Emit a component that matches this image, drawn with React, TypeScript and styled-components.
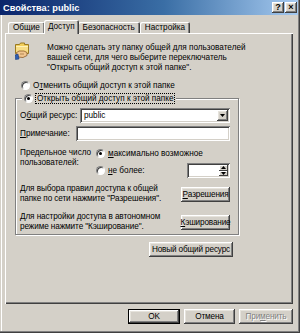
import React from "react";
import styled, { createGlobalStyle } from "styled-components";

const GlobalStyle = createGlobalStyle`
  html, body {
    margin: 0;
    padding: 0;
    background: #d4d0c8;
  }
  body {
    font-family: "Liberation Sans", Arial, sans-serif;
    font-size: 8.2px;
    color: #000;
  }
`;

const raised = `
  box-shadow: inset -1px -1px #404040, inset 1px 1px #fff, inset -2px -2px #808080, inset 2px 2px #e6e3dc;
`;

const sunken = `
  box-shadow: inset 1px 1px #808080, inset -1px -1px #fff, inset 2px 2px #404040, inset -2px -2px #d4d0c8;
`;

const Window = styled.div`
  width: 300px;
  height: 333px;
  box-sizing: border-box;
  background: #d4d0c8;
  display: flex;
  flex-direction: column;
  padding: 0 2px 2px 0;
  box-shadow: inset -1px -1px #404040, inset -2px -2px #808080, inset 1px 0 #d4d0c8, inset 2px 0 #fff;
`;

const TitleBar = styled.div`
  height: 15px;
  flex: none;
  display: flex;
  align-items: center;
  justify-content: space-between;
  padding: 0 1px 0 3px;
  background: linear-gradient(90deg, #0a246a 0%, #3a6ea5 55%, #a6caf0 100%);
  color: #fff;
  font-weight: bold;
  font-size: 9.2px;
`;

const TitleButtons = styled.div`
  display: flex;
  gap: 1px;
`;

const TitleButton = styled.div`
  width: 12px;
  height: 11px;
  background: #d4d0c8;
  ${raised}
  color: #000;
  font-size: 9px;
  font-weight: bold;
  line-height: 11px;
  text-align: center;
`;

const Body = styled.div`
  flex: 1;
  display: flex;
  flex-direction: column;
  padding: 5px 5px 0 5px;
`;

const TabStrip = styled.div`
  height: 13px;
  display: flex;
  align-items: flex-end;
  padding-left: 3px;
`;

const Tab = styled.div<{ $active?: boolean }>`
  height: ${(p) => (p.$active ? 14 : 11)}px;
  line-height: ${(p) => (p.$active ? 13 : 11)}px;
  padding: 0 ${(p) => (p.$active ? 4 : 5)}px;
  margin: 0 ${(p) => (p.$active ? -1 : 0)}px ${(p) => (p.$active ? -1 : 0)}px;
  position: relative;
  z-index: ${(p) => (p.$active ? 1 : 0)};
  background: #d4d0c8;
  border-radius: 2px 2px 0 0;
  box-shadow: inset 1px 1px #fff, inset -1px 0 #404040, inset -2px 0 #808080;
  white-space: nowrap;
`;

const Panel = styled.div`
  height: 271px;
  box-sizing: border-box;
  display: flex;
  flex-direction: column;
  padding: 9px 10px 0 10px;
  box-shadow: inset 1px 1px #fff, inset -1px -1px #404040, inset -2px -2px #808080;
`;

const IntroRow = styled.div`
  display: flex;
  gap: 18px;
  height: 31px;
`;

const IntroText = styled.div`
  padding-top: 1px;
  line-height: 10px;
`;

const RadioRow = styled.div<{ $indent?: number; $top?: number; $h?: number }>`
  display: flex;
  align-items: center;
  gap: 3px;
  height: ${(p) => p.$h ?? 10}px;
  margin-left: ${(p) => p.$indent ?? 0}px;
  margin-top: ${(p) => p.$top ?? 0}px;
  white-space: nowrap;
`;

const Radio = styled.span<{ $checked?: boolean }>`
  position: relative;
  flex: none;
  width: 9px;
  height: 9px;
  box-sizing: border-box;
  border-radius: 50%;
  background: #fff;
  border: 1px solid;
  border-color: #808080 #fff #fff #808080;
  box-shadow: inset 1px 1px #404040;
  &::after {
    content: "";
    display: ${(p) => (p.$checked ? "block" : "none")};
    position: absolute;
    left: 2px;
    top: 2px;
    width: 3px;
    height: 3px;
    border-radius: 50%;
    background: #000;
  }
`;

const Focused = styled.span`
  outline: 1px dotted #000;
  outline-offset: 0;
  padding: 0 1px;
`;

const U = styled.span`
  text-decoration: underline;
`;

const Group = styled.fieldset`
  margin: 3px 0 0 0;
  width: 224px;
  box-sizing: border-box;
  min-width: 0;
  padding: 5px 8px 2px 4px;
  border: 1px solid #808080;
  box-shadow: inset 1px 1px #fff, 1px 1px 0 #fff;
`;

const Legend = styled.legend`
  margin-left: 2px;
  padding: 0 2px;
  height: 10px;
  background: #d4d0c8;
  display: flex;
  align-items: center;
  gap: 3px;
  white-space: nowrap;
`;

const FieldRow = styled.div<{ $top?: number; $label?: number }>`
  display: grid;
  grid-template-columns: ${(p) => p.$label ?? 60}px 1fr;
  align-items: center;
  height: 15px;
  margin-top: ${(p) => p.$top ?? 0}px;
  white-space: nowrap;
`;

const Field = styled.div`
  height: 15px;
  box-sizing: border-box;
  background: #fff;
  ${sunken}
  display: flex;
  align-items: center;
  padding: 0 2px 0 4px;
`;

const ComboText = styled.span`
  flex: 1;
`;

const ArrowButton = styled.div`
  width: 11px;
  height: 11px;
  background: #d4d0c8;
  ${raised}
  display: flex;
  align-items: center;
  justify-content: center;
`;

const LimitRow = styled.div`
  display: flex;
  margin-top: 7px;
`;

const LimitLabel = styled.div`
  width: 76px;
  line-height: 10px;
  white-space: nowrap;
`;

const LimitOptions = styled.div`
  flex: 1;
  display: flex;
  flex-direction: column;
`;

const Spinner = styled.div`
  margin-left: auto;
  width: 43px;
  height: 15px;
  box-sizing: border-box;
  background: #fff;
  ${sunken}
  display: flex;
  justify-content: flex-end;
  padding: 2px;
`;

const SpinButtons = styled.div`
  width: 9px;
  display: flex;
  flex-direction: column;
`;

const SpinButton = styled.div`
  flex: 1;
  background: #d4d0c8;
  box-shadow: inset -1px -1px #404040, inset 1px 1px #fff;
  display: flex;
  align-items: center;
  justify-content: center;
`;

const ActionRow = styled.div<{ $top: number }>`
  display: flex;
  align-items: center;
  justify-content: space-between;
  margin-top: ${(p) => p.$top}px;
`;

const ActionText = styled.div`
  line-height: 10px;
  white-space: nowrap;
  letter-spacing: -0.1px;
`;

const Button = styled.div<{ $w: number; $default?: boolean; $disabled?: boolean }>`
  width: ${(p) => p.$w}px;
  height: 15px;
  box-sizing: border-box;
  flex: none;
  background: #d4d0c8;
  ${raised}
  ${(p) => (p.$default ? "border: 1px solid #000;" : "")}
  display: flex;
  align-items: center;
  justify-content: center;
  white-space: nowrap;
  letter-spacing: -0.15px;
  color: ${(p) => (p.$disabled ? "#808080" : "#000")};
  text-shadow: ${(p) => (p.$disabled ? "1px 1px #fff" : "none")};
`;

const NewShareRow = styled.div`
  width: 224px;
  display: flex;
  justify-content: flex-end;
  padding-right: 6px;
  box-sizing: border-box;
  margin-top: 7px;
`;

const Footer = styled.div`
  display: flex;
  justify-content: flex-end;
  gap: 4px;
  margin-top: 5px;
`;

const Triangle = ({ up }: { up?: boolean }) => (
  <svg width="5" height="3" viewBox="0 0 5 3">
    <path d={up ? "M2.5 0 L5 3 L0 3 Z" : "M0 0 L5 0 L2.5 3 Z"} fill="#000" />
  </svg>
);

const ShareFolderIcon = () => (
  <svg width="14" height="18" viewBox="0 0 14 18">
    <path d="M0.5 2.5 L4.5 2.5 L5.5 1 L9.5 1 L9.5 2.5 L13.5 2.5 L13.5 11.5 L0.5 11.5 Z" fill="#f2cf5b" stroke="#9a7a22" />
    <path d="M1 4 L13 4 L13 11 L1 11 Z" fill="#f8de85" />
    <path d="M1 4.5 L13 4.5" stroke="#fff2b8" />
    <path d="M1 11 L4 9 L9 9 L12 10.5 L12 13.5 L8 15.5 L3 15 Z" fill="#f1c690" stroke="#8a5a2a" strokeWidth="0.8" />
    <path d="M0 13 L3 12 L4 17 L0.5 17.5 Z" fill="#2f5fb3" stroke="#1c3c7a" strokeWidth="0.6" />
    <path d="M5 12 L9 12" stroke="#8a5a2a" strokeWidth="0.6" />
  </svg>
);

const App: React.FC = () => {
  return (
    <>
      <GlobalStyle />
      <Window>
        <TitleBar>
          <span>Свойства: public</span>
          <TitleButtons>
            <TitleButton>?</TitleButton>
            <TitleButton>×</TitleButton>
          </TitleButtons>
        </TitleBar>
        <Body>
          <TabStrip>
            <Tab>Общие</Tab>
            <Tab $active>Доступ</Tab>
            <Tab>Безопасность</Tab>
            <Tab>Настройка</Tab>
          </TabStrip>
          <Panel>
            <IntroRow>
              <ShareFolderIcon />
              <IntroText>
                Можно сделать эту папку общей для пользователей
                <br />
                вашей сети, для чего выберите переключатель
                <br />
                "Открыть общий доступ к этой папке".
              </IntroText>
            </IntroRow>
            <RadioRow $indent={6} $top={7}>
              <Radio />
              <span>
                О<U>т</U>менить общий доступ к этой папке
              </span>
            </RadioRow>
            <Group>
              <Legend>
                <Radio $checked />
                <Focused>Открыть общий доступ к этой папке</Focused>
              </Legend>
              <FieldRow>
                <span>
                  О<U>б</U>щий ресурс:
                </span>
                <Field>
                  <ComboText>public</ComboText>
                  <ArrowButton>
                    <Triangle />
                  </ArrowButton>
                </Field>
              </FieldRow>
              <FieldRow $top={3} $label={56}>
                <span>
                  <U>П</U>римечание:
                </span>
                <Field />
              </FieldRow>
              <LimitRow>
                <LimitLabel>
                  Предельное число
                  <br />
                  пользователей:
                </LimitLabel>
                <LimitOptions>
                  <RadioRow>
                    <Radio $checked />
                    <span>
                      <U>м</U>аксимально возможное
                    </span>
                  </RadioRow>
                  <RadioRow $top={5} $h={15}>
                    <Radio />
                    <span>
                      <U>н</U>е более:
                    </span>
                    <Spinner>
                      <SpinButtons>
                        <SpinButton>
                          <Triangle up />
                        </SpinButton>
                        <SpinButton>
                          <Triangle />
                        </SpinButton>
                      </SpinButtons>
                    </Spinner>
                  </RadioRow>
                </LimitOptions>
              </LimitRow>
              <ActionRow $top={6}>
                <ActionText>
                  Для выбора правил доступа к общей
                  <br />
                  папке по сети нажмите "Разрешения".
                </ActionText>
                <Button $w={49}>
                  <U>Р</U>азрешения
                </Button>
              </ActionRow>
              <ActionRow $top={8}>
                <ActionText>
                  Для настройки доступа в автономном
                  <br />
                  режиме нажмите "Кэширование".
                </ActionText>
                <Button $w={49}>
                  <U>К</U>эширование
                </Button>
              </ActionRow>
            </Group>
            <NewShareRow>
              <Button $w={84}>Новый общий ресурс</Button>
            </NewShareRow>
          </Panel>
          <Footer>
            <Button $w={52} $default>
              OK
            </Button>
            <Button $w={51}>Отмена</Button>
            <Button $w={54} $disabled>
              При<U>м</U>енить
            </Button>
          </Footer>
        </Body>
      </Window>
    </>
  );
};

export default App;
